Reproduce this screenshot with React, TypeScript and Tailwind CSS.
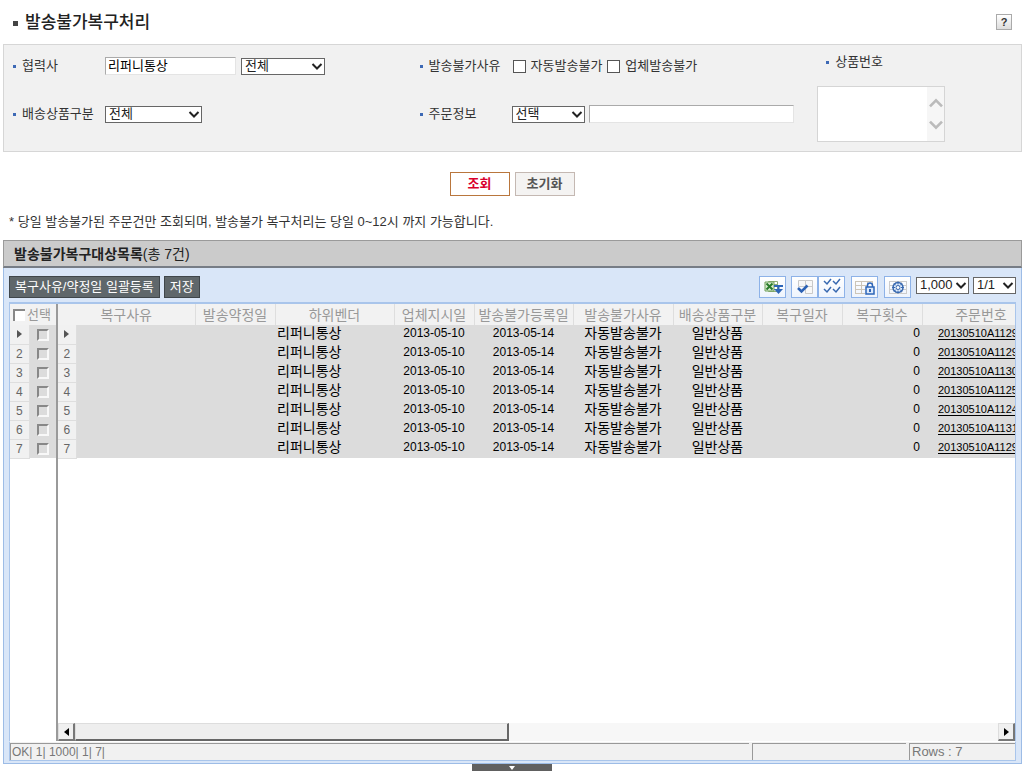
import { ReactNode } from "react";

const rows = [
  "20130510A11295",
  "20130510A11298",
  "20130510A11302",
  "20130510A11251",
  "20130510A11247",
  "20130510A11315",
  "20130510A11296",
];

const columns: { label: string; width: string }[] = [
  { label: "복구사유", width: "w-[119px]" },
  { label: "발송약정일", width: "w-[80px]" },
  { label: "하위벤더", width: "w-[119px]" },
  { label: "업체지시일", width: "w-[80px]" },
  { label: "발송불가등록일", width: "w-[99px]" },
  { label: "발송불가사유", width: "w-[100px]" },
  { label: "배송상품구분", width: "w-[89px]" },
  { label: "복구일자", width: "w-[80px]" },
  { label: "복구횟수", width: "w-[80px]" },
  { label: "주문번호", width: "w-[118px]" },
];

export default function App() {
  return (
    <main className="bg-white pb-1.5 font-['Liberation_Sans','Noto_Sans_CJK_KR',sans-serif] text-[13px] leading-5 text-[#333]">
      <header className="flex h-11 items-center justify-between pl-[13px] pr-3">
        <h1 className="flex items-center gap-[7px] pt-0.5 text-[17px] font-medium text-[#222]">
          <span className="size-[5px] bg-[#444]" />
          발송불가복구처리
        </h1>
        <button
          type="button"
          aria-label="도움말"
          className="flex size-4 items-center justify-center border border-[#aaa] bg-linear-to-b from-white to-[#ddd] text-[11px] font-bold leading-3"
        >
          ?
        </button>
      </header>
      <SearchForm />
      <div className="mt-5 flex justify-center gap-[5px]">
        <button
          type="submit"
          form="search"
          className="h-6 w-[60px] border border-[#b9763d] bg-white text-[13px] font-bold leading-5 text-[#d9002b]"
        >
          조회
        </button>
        <button
          type="reset"
          form="search"
          className="h-6 w-[60px] border border-[#c4b8b2] bg-[#f4f3f2] text-[13px] font-bold leading-5 text-[#555]"
        >
          초기화
        </button>
      </div>
      <p className="mt-4 pl-[9px]">
        * 당일 발송불가된 주문건만 조회되며, 발송불가 복구처리는 당일 0~12시
        까지 가능합니다.
      </p>
      <section className="ml-[3px] mr-0.5 mt-2">
        <h2 className="flex h-7 items-center border border-b-2 border-[#9a9a9a] border-b-[#777d86] bg-[#cbcbcb] pl-2.5 text-sm text-[#222]">
          <b>발송불가복구대상목록</b>(총 7건)
        </h2>
        <div className="border border-t-0 border-[#9dbce6] bg-[#d9e6f8] px-[5px] pb-0.5">
          <Toolbar />
          <Grid />
          <StatusBar />
        </div>
      </section>
      <button
        type="button"
        aria-label="펼치기"
        className="mx-auto flex h-[7px] w-20 items-center justify-center bg-[#606060]"
      >
        <svg width="6" height="4" viewBox="0 0 6 4">
          <path d="M0 0h6L3 4z" fill="#fff" />
        </svg>
      </button>
    </main>
  );
}

function SearchForm() {
  return (
    <form
      id="search"
      onSubmit={(e) => e.preventDefault()}
      className="ml-[3px] mr-0.5 grid h-[108px] grid-cols-[406fr_406fr_206fr] border border-[#d6d6d6] bg-[#f1f1f1]"
    >
      <div className="flex flex-col gap-7 pl-[9px] pt-[11px]">
        <Field id="vendor" label="협력사">
          <input
            id="vendor"
            defaultValue="리퍼니통상"
            className="mr-[5px] h-[18px] w-[131px] border border-[#e4e4e4] border-l-[#aaa] border-t-[#aaa] bg-white px-0.5 text-[13px] text-black"
          />
          <Select label="협력사 구분" text="전체" width="w-[84px]" />
        </Field>
        <Field id="kind" label="배송상품구분">
          <Select id="kind" text="전체" width="w-[97px]" />
        </Field>
      </div>
      <div className="flex flex-col gap-7 pl-2.5 pt-[11px]">
        <Field label="발송불가사유">
          <Check label="자동발송불가" />
          <Check label="업체발송불가" />
        </Field>
        <Field id="order" label="주문정보">
          <Select id="order" text="선택" width="w-[73px]" />
          <input
            aria-label="주문정보 검색어"
            className="ml-1 h-[18px] w-[205px] border border-[#e4e4e4] border-l-[#aaa] border-t-[#aaa] bg-white px-0.5"
          />
        </Field>
      </div>
      <div className="pt-[7px]">
        <div className="pl-[11px]">
          <Field id="goods" label="상품번호" />
        </div>
        <div className="relative ml-0.5 mt-3.5 w-32">
          <textarea
            id="goods"
            className="block h-14 w-32 resize-none border border-[#d5d5d5] bg-white pr-5"
          />
          <div className="pointer-events-none absolute inset-y-px right-px flex w-[17px] flex-col items-center justify-evenly bg-[#f6f6f6]">
            <Chevron className="h-3 w-4 rotate-180 text-[#bbb]" />
            <Chevron className="h-3 w-4 text-[#bbb]" />
          </div>
        </div>
      </div>
    </form>
  );
}

function Field({
  id,
  label,
  children,
}: {
  id?: string;
  label: string;
  children?: ReactNode;
}) {
  return (
    <div className="flex h-5 items-center whitespace-nowrap">
      <span className="mr-1.5 size-[3px] bg-[#3d69b5]" />
      <label htmlFor={id} className="w-[83px]">
        {label}
      </label>
      {children}
    </div>
  );
}

function Check({ label }: { label: string }) {
  return (
    <label className="ml-px mr-1 flex items-center gap-[5px]">
      <input
        type="checkbox"
        className="size-[13px] appearance-none border border-[#555] bg-white"
      />
      {label}
    </label>
  );
}

function Chevron({ className }: { className: string }) {
  return (
    <svg viewBox="0 0 12 9" fill="none" className={className}>
      <path d="M1.5 2 6 6.5 10.5 2" stroke="currentColor" strokeWidth="2" />
    </svg>
  );
}

function Select({
  id,
  label,
  text,
  width,
}: {
  id?: string;
  label?: string;
  text: string;
  width: string;
}) {
  return (
    <span className={`relative flex h-[17px] ${width}`}>
      <select
        id={id}
        aria-label={label}
        className="h-full w-full appearance-none border border-[#666] bg-white pl-[3px] text-[13px] leading-[14px] text-[#222]"
      >
        <option>{text}</option>
      </select>
      <Chevron className="pointer-events-none absolute right-0.5 top-1 h-[9px] w-3 text-[#222]" />
    </span>
  );
}

function Toolbar() {
  return (
    <div className="flex h-[34px] items-center justify-between pt-1">
      <div className="flex gap-1">
        <DarkButton>복구사유/약정일 일괄등록</DarkButton>
        <DarkButton>저장</DarkButton>
      </div>
      <div className="flex items-center">
        <IconButton label="엑셀 저장">
          <path d="M8.500 4.500h9v10h-9z" fill="#fff" stroke="#8fae76" />
          <path d="M10 7.500h7M10 12.500h7" stroke="#8fae76" />
          <path d="M5 5h9v9H5z" fill="#d9ecd0" stroke="#6f9f5b" />
          <path d="m6.500 6.500 6 6M12.500 6.500l-6 6" stroke="#297a2c" strokeWidth="2" />
          <path d="M14 9h9M18.500 9v4" stroke="#2d65b8" strokeWidth="2" />
          <path d="M14 12h9l-4.500 5z" fill="#2d65b8" />
        </IconButton>
        <div className="ml-[5px] mr-1.5 flex">
          <IconButton label="선택">
            <path
              d="M6.500 3.500h7v6h-7zM13.500 3.500h7v6h-7zM13.500 9.500h7v7h-7z"
              fill="#f8f8f8"
              stroke="#c9c9c9"
            />
            <path d="m6 11 3.500 3.500 6-6" stroke="#2c62b5" strokeWidth="2.500" />
          </IconButton>
          <IconButton label="전체 선택">
            <path
              d="m5 4 3 3 4-5M14 4l3 3 4-5M5 12l3 3 4-5M14 12l3 3 4-5"
              stroke="#3768b0"
              strokeWidth="1.500"
            />
          </IconButton>
        </div>
        <IconButton label="틀 고정">
          <path
            d="M3 4.500h17M3 8.500h12M3 12.500h10M3 16.500h10M3.500 4v13M9.500 4v13M15.500 4v4M20.500 4v4"
            stroke="#ccc5b8"
          />
          <path
            d="M15.500 10V8.500a2.500 2.500 0 0 1 5 0V10"
            stroke="#2d65b8"
            strokeWidth="1.500"
          />
          <path d="M14 10h8v7h-8z" fill="#dce9fb" stroke="#2d65b8" strokeWidth="1.500" />
          <path d="M18 12v3" stroke="#2d65b8" strokeWidth="2" />
        </IconButton>
        <div className="ml-1.5 flex">
          <IconButton label="설정">
            <path
              d="M4 4.500h18M4 8.500h18M4 12.500h18M4 16.500h18M4.500 4v13M10.500 4v13M16.500 4v13M21.500 4v13"
              stroke="#ccc"
            />
            <circle cx="13" cy="10.500" r="5" fill="#e3eefc" stroke="#3768b0" strokeWidth="1.500" />
            <path
              d="M13 4.500v3M13 13.500v3M7 10.500h3M16 10.500h3M9 6.500l2 2M15 12.500l2 2M17 6.500l-2 2M11 12.500l-2 2"
              stroke="#3768b0"
            />
            <circle cx="13" cy="10.500" r="2" fill="#fff" stroke="#3768b0" />
          </IconButton>
        </div>
        <div className="mb-1 ml-[5px] flex gap-1">
          <Select label="페이지당 건수" text="1,000" width="w-[53px]" />
          <Select label="페이지" text="1/1" width="w-[43px]" />
        </div>
      </div>
    </div>
  );
}

function DarkButton({ children }: { children: ReactNode }) {
  return (
    <button
      type="button"
      className="h-[22px] whitespace-nowrap border border-[#3f464b] bg-[#5f676b] px-[5px] text-[13px] leading-5 text-white"
    >
      {children}
    </button>
  );
}

function IconButton({
  label,
  children,
}: {
  label: string;
  children: ReactNode;
}) {
  return (
    <button
      type="button"
      aria-label={label}
      className="h-[22px] w-[27px] border border-[#8db2e8] bg-linear-to-b from-white to-[#eef4fd]"
    >
      <svg width="25" height="20" viewBox="0 0 25 20" fill="none">
        {children}
      </svg>
    </button>
  );
}

function Arrow({ className }: { className: string }) {
  return (
    <svg width="5" height="8" viewBox="0 0 5 8" className={className}>
      <path d="M0 0v8l5-4z" fill="currentColor" />
    </svg>
  );
}

function RowNumber({ index }: { index: number }) {
  return (
    <td className="border-b border-r border-[#dedede] bg-[#f1f1f1] text-center align-middle text-xs leading-[18px] text-[#666]">
      {index === 0 ? <Arrow className="mx-auto text-[#555]" /> : index + 1}
    </td>
  );
}

function Grid() {
  return (
    <div className="flex h-[439px] border-x border-t-2 border-[#a9c5eb] bg-white">
      <div className="w-12 shrink-0 border-r-2 border-[#9a9a9a]">
        <table className="w-full table-fixed border-collapse">
          <colgroup>
            <col className="w-[19px]" />
            <col />
          </colgroup>
          <thead>
            <tr className="h-[21px] bg-[#f2f2f2] text-[#999]">
              <th colSpan={2} className="p-0 font-normal">
                <label className="flex items-center whitespace-nowrap pl-[3px] leading-5">
                  <input
                    type="checkbox"
                    className="size-3 shrink-0 appearance-none border-l-2 border-t-2 border-[#888] bg-white"
                  />
                  <span className="ml-0.5">선택</span>
                </label>
              </th>
            </tr>
          </thead>
          <tbody>
            {rows.map((order, i) => (
              <tr key={order} className="h-[19px] bg-[#dcdcdc]">
                <RowNumber index={i} />
                <td>
                  <input
                    type="checkbox"
                    aria-label={`${i + 1}행 선택`}
                    className="mx-auto block size-3 appearance-none border-2 border-[#f8f8f8] border-l-[#888] border-t-[#888] bg-[#dcdcdc]"
                  />
                </td>
              </tr>
            ))}
          </tbody>
        </table>
      </div>
      <div className="flex min-w-0 flex-1 flex-col justify-between">
        <div className="overflow-hidden">
          <table className="w-[982px] table-fixed border-collapse">
            <colgroup>
              <col className="w-[18px]" />
              {columns.map(({ label, width }) => (
                <col key={label} className={width} />
              ))}
            </colgroup>
            <thead>
              <tr className="h-[21px] bg-[#f2f2f2] text-sm leading-5 text-[#999]">
                {columns.map(({ label }, i) => (
                  <th
                    key={label}
                    colSpan={i === 0 ? 2 : 1}
                    className="whitespace-nowrap border-r border-[#dedede] p-0 font-normal"
                  >
                    {label}
                  </th>
                ))}
              </tr>
            </thead>
            <tbody>
              {rows.map((order, i) => (
                <tr
                  key={order}
                  className="h-[19px] whitespace-nowrap bg-[#dcdcdc] text-center align-top text-sm leading-[17px] text-black"
                >
                  <RowNumber index={i} />
                  <td />
                  <td />
                  <td className="pl-0.5 text-left">리퍼니통상</td>
                  <td className="text-xs leading-[17px]">2013-05-10</td>
                  <td className="text-xs leading-[17px]">2013-05-14</td>
                  <td>자동발송불가</td>
                  <td>일반상품</td>
                  <td />
                  <td className="pr-0.5 text-right text-xs leading-[17px]">0</td>
                  <td className="pl-4 text-left text-[11px] leading-[17px]">
                    <a href="#order" className="underline underline-offset-2">
                      {order}
                    </a>
                  </td>
                </tr>
              ))}
            </tbody>
          </table>
        </div>
        <div className="flex h-[18px] bg-[#f7f7f7]">
          <ScrollButton label="왼쪽으로">
            <Arrow className="rotate-180 text-black" />
          </ScrollButton>
          <div className="flex-1">
            <div className="h-full w-[47%] border border-b-2 border-r-2 border-[#ddd] border-b-[#666] border-r-[#666] bg-[#eee]" />
          </div>
          <ScrollButton label="오른쪽으로">
            <Arrow className="text-black" />
          </ScrollButton>
        </div>
      </div>
    </div>
  );
}

function ScrollButton({
  label,
  children,
}: {
  label: string;
  children: ReactNode;
}) {
  return (
    <button
      type="button"
      aria-label={label}
      className="flex w-[17px] items-center justify-center border border-b-2 border-r-2 border-[#ddd] border-b-[#777] border-r-[#777] bg-[#f0f0f0]"
    >
      {children}
    </button>
  );
}

function StatusBar() {
  return (
    <div className="flex h-5 gap-[3px] border border-[#a9c5eb] border-t-white bg-[#f1f1f1] pt-px leading-4 text-[#777]">
      <div className="flex-1 border-l border-t border-[#999] pl-px text-xs">
        OK| 1| 1000| 1| 7|
      </div>
      <div className="w-[154px] border-l border-t border-[#999]" />
      <div className="w-[106px] border-l border-t border-[#999] pl-0.5">
        Rows : 7
      </div>
    </div>
  );
}
